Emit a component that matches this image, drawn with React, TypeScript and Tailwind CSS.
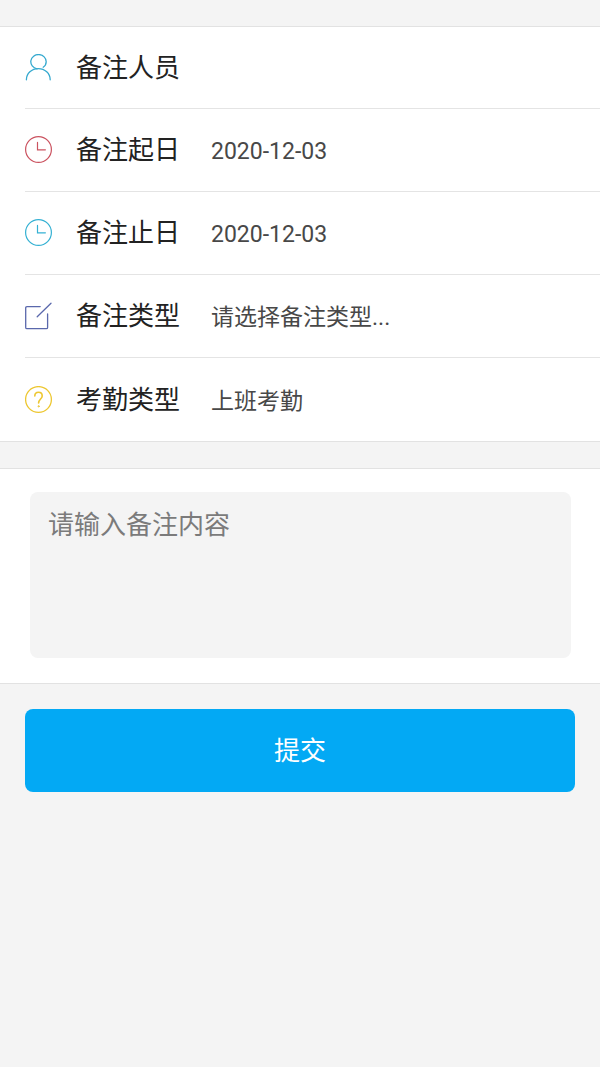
import type { ReactNode } from 'react';

const iconClass = 'h-7 w-7 shrink-0 fill-none';

function PersonIcon() {
  return (
    <svg viewBox="0 0 28 28" className={`${iconClass} stroke-[#35a9cf]`} strokeWidth="1.3" strokeLinecap="round" aria-hidden="true">
      <path d="M18.2 13.2C20.1 12 21.2 10.1 21.2 7.8A7.7 7.2 0 1 0 12 14.8" />
      <path d="M1.4 25.8C1.4 19.4 6.7 14.6 13.3 14.6S25.2 19.4 25.2 25.8" />
    </svg>
  );
}

function ClockIcon({ tone }: { tone: string }) {
  return (
    <svg viewBox="0 0 28 28" className={`${iconClass} ${tone}`} strokeWidth="1.2" strokeLinecap="round" aria-hidden="true">
      <circle cx="13.5" cy="13.5" r="12.9" />
      <path d="M12.5 6.4V13.8H20.4" />
    </svg>
  );
}

function EditIcon() {
  return (
    <svg viewBox="0 0 28 28" className={`${iconClass} stroke-[#5a68ac]`} strokeWidth="1.3" strokeLinecap="round" aria-hidden="true">
      <path d="M15.2 4.6H2Q.7 4.6 .7 5.9V25.4Q.7 26.7 2 26.7H21.3Q22.6 26.7 22.6 25.4V12" />
      <path d="M12.2 14.7L26 1.3" />
    </svg>
  );
}

function QuestionIcon() {
  return (
    <svg viewBox="0 0 28 28" className={`${iconClass} stroke-[#edc731]`} strokeWidth="1.3" strokeLinecap="round" aria-hidden="true">
      <circle cx="13.5" cy="13.5" r="12.9" />
      <path d="M9.8 10C9.8 7.7 11.3 6.3 13.5 6.3S17.2 7.8 17.2 9.9C17.2 12.9 13.6 13.2 13.6 17" strokeWidth="1.6" />
      <circle cx="13.6" cy="20.3" r=".6" strokeWidth="1" />
    </svg>
  );
}

function Row({ id, label, icon, children }: { id: string; label: string; icon: ReactNode; children: ReactNode }) {
  return (
    <div className="group pl-[25px]">
      <div className="flex h-[83px] items-center border-b border-[#e4e4e4] group-first:h-[82px] group-last:border-b-0">
        {icon}
        <label htmlFor={id} className="ml-[23px] w-[135px] shrink-0 text-[26px] leading-9 text-[#222]">
          {label}
        </label>
        {children}
      </div>
    </div>
  );
}

const fieldClass =
  'min-w-0 flex-1 appearance-none border-0 bg-transparent p-0 text-[23px] leading-9 text-[#484848] outline-none';
const inputClass = `${fieldClass} h-10 pt-0.5`;
const selectClass = `${fieldClass} h-10 pt-1`;

export default function App() {
  return (
    <form
      onSubmit={(event) => event.preventDefault()}
      className="min-h-screen bg-[#f4f4f4] pt-[26px] font-[Roboto,'Noto_Sans_CJK_SC',sans-serif]"
    >
      <section className="border-y border-[#e2e2e2] bg-white">
        <Row id="person" label="备注人员" icon={<PersonIcon />}>
          <input id="person" className={inputClass} />
        </Row>
        <Row id="start" label="备注起日" icon={<ClockIcon tone="stroke-[#cb5360]" />}>
          <input id="start" defaultValue="2020-12-03" className={inputClass} />
        </Row>
        <Row id="end" label="备注止日" icon={<ClockIcon tone="stroke-[#35b1d3]" />}>
          <input id="end" defaultValue="2020-12-03" className={inputClass} />
        </Row>
        <Row id="type" label="备注类型" icon={<EditIcon />}>
          <select id="type" className={selectClass}>
            <option>请选择备注类型...</option>
          </select>
        </Row>
        <Row id="attendance" label="考勤类型" icon={<QuestionIcon />}>
          <select id="attendance" className={selectClass}>
            <option>上班考勤</option>
          </select>
        </Row>
      </section>

      <section className="mt-[26px] border-y border-[#e2e2e2] bg-white pt-[23px] pr-[29px] pb-[25px] pl-[30px]">
        <textarea
          aria-label="备注内容"
          placeholder="请输入备注内容"
          className="block h-[166px] w-full resize-none rounded-lg border-0 bg-[#f4f4f4] px-[18px] py-[15px] text-[26px] leading-9 text-[#222] outline-none placeholder:text-[#7b7b7b]"
        />
      </section>

      <div className="px-[25px] pt-[25px]">
        <button type="submit" className="h-[83px] w-full rounded-lg bg-[#03a9f4] text-[26px] leading-9 text-white">
          提交
        </button>
      </div>
    </form>
  );
}
